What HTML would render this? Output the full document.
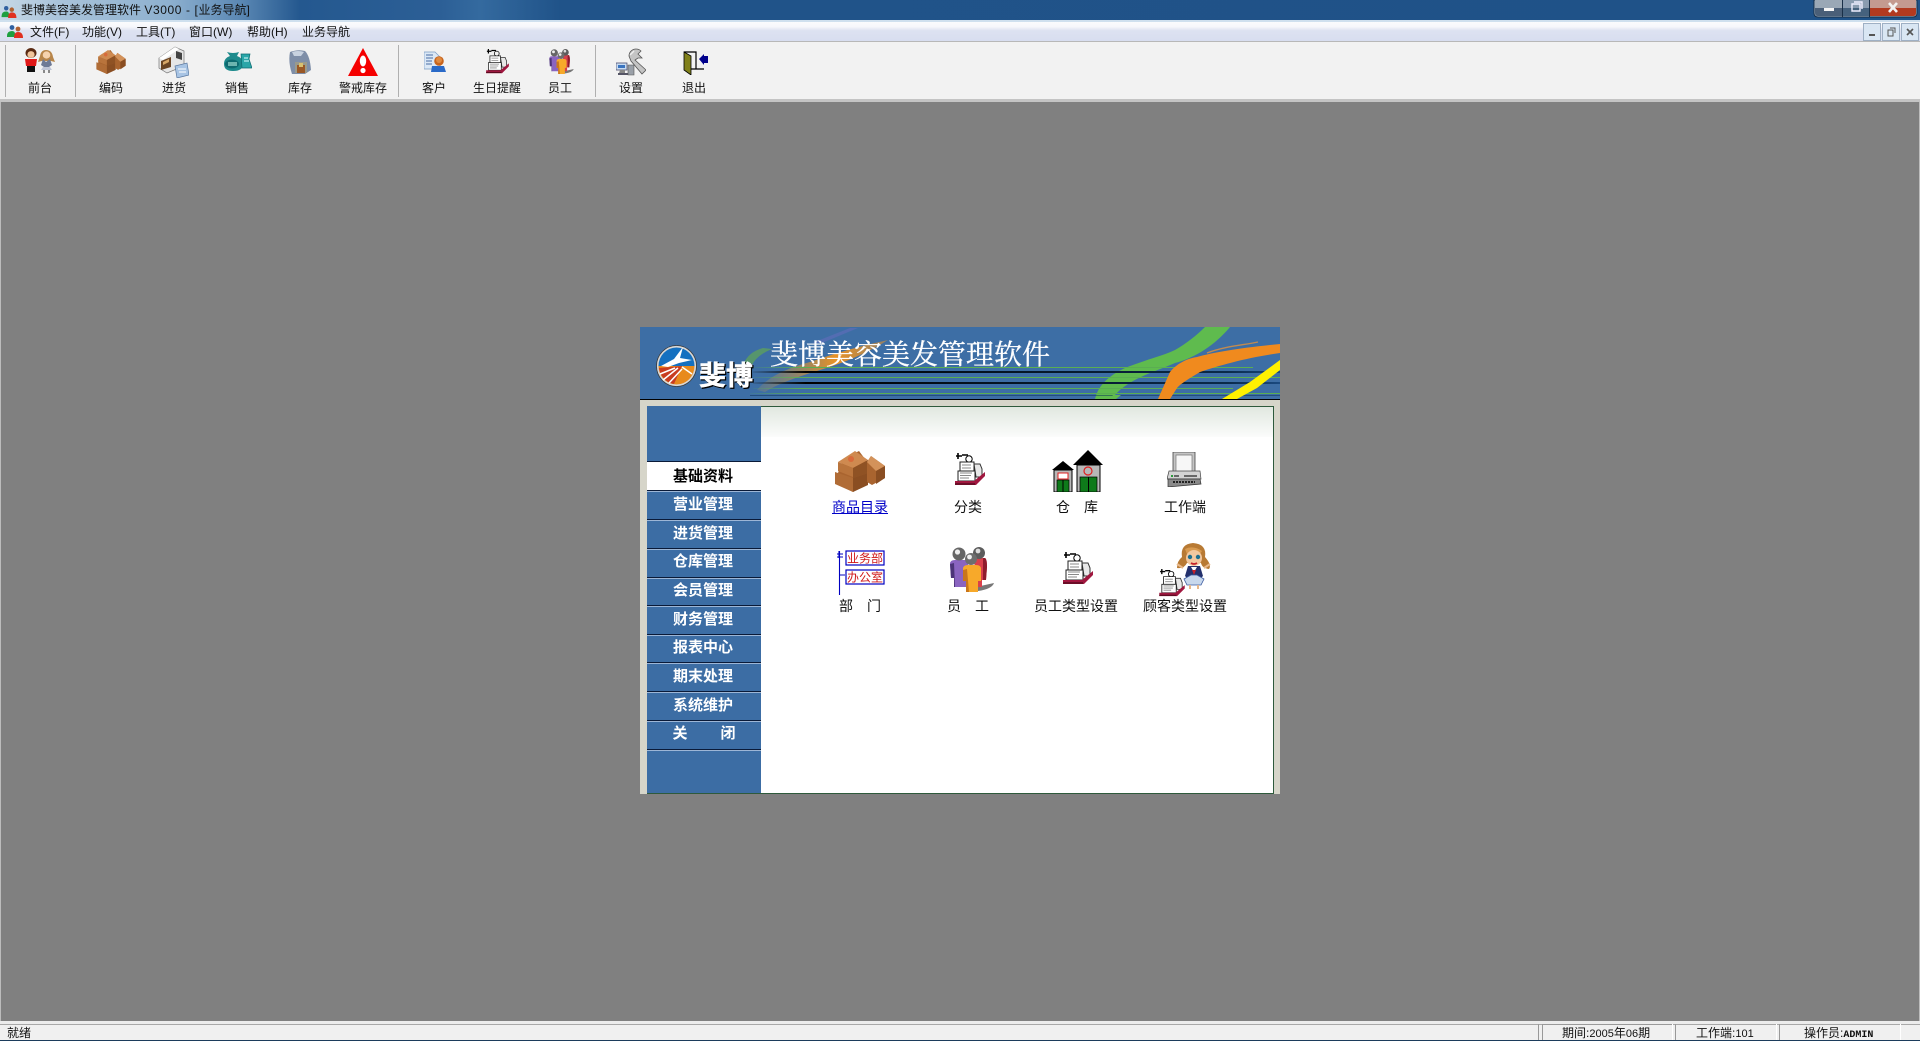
<!DOCTYPE html>
<html lang="zh"><head><meta charset="utf-8"><title>斐博美容美发管理软件</title>
<style>
html,body{margin:0;padding:0;width:1920px;height:1041px;overflow:hidden;background:#808080}
body{position:relative;font-family:"Liberation Sans","WenQuanYi Zen Hei","Noto Sans CJK SC",sans-serif;font-size:12px;color:#111}
.a{position:absolute}
.t{position:absolute;white-space:nowrap;line-height:16px;height:16px}
.c{transform:translateX(-50%)}
.m{font-size:14px;color:#111}
.s{font-weight:bold;font-size:15px;color:#fff;font-family:"Liberation Sans","Noto Sans CJK SC",sans-serif}
.mono{font-family:"Liberation Mono",monospace;font-size:10px}
.dg{font-family:"Liberation Sans",sans-serif;font-size:11px}
</style></head><body>
<!-- title bar -->
<div class="a" style="left:0;top:0;width:1920px;height:20px;background:linear-gradient(90deg,#c6d8e6 0,#a9c3da 60px,#8db0cf 170px,#5b88b4 240px,#24588f 300px,#2c5f96 440px,#346a9f 480px,#205389 560px,#1f5288 1920px)"></div>
<div class="a" style="left:0;top:20px;width:1920px;height:2px;background:#cfe0ee"></div>
<div class="t" style="left:21px;top:2px;color:#111">斐博美容美发管理软件 <span style="letter-spacing:.6px">V3000 - [</span>业务导航]</div>
<!-- menu bar -->
<div class="a" style="left:0;top:22px;width:1920px;height:19px;background:linear-gradient(#fafbfd 0,#f6f7fb 25%,#dde2f1 45%,#d8def0 100%)"></div>
<div class="a" style="left:0;top:41px;width:1920px;height:1px;background:#b8b8b8"></div>
<div class="t" style="left:30px;top:24px">文件(F)</div>
<div class="t" style="left:82px;top:24px">功能(V)</div>
<div class="t" style="left:136px;top:24px">工具(T)</div>
<div class="t" style="left:189px;top:24px">窗口(W)</div>
<div class="t" style="left:247px;top:24px">帮助(H)</div>
<div class="t" style="left:302px;top:24px">业务导航</div>
<!-- toolbar -->
<div class="a" style="left:0;top:42px;width:1920px;height:57px;background:#f2f2f2"></div>
<div class="a" style="left:0;top:99px;width:1920px;height:3px;background:#c4c4c4"></div>
<div class="a" style="left:5px;top:45px;width:1px;height:52px;background:#b0b0b0"></div>
<div class="a" style="left:75px;top:45px;width:1px;height:52px;background:#b0b0b0"></div>
<div class="a" style="left:398px;top:45px;width:1px;height:52px;background:#b0b0b0"></div>
<div class="a" style="left:595px;top:45px;width:1px;height:52px;background:#b0b0b0"></div>
<div class="t c" style="left:40px;top:80px">前台</div>
<div class="t c" style="left:111px;top:80px">编码</div>
<div class="t c" style="left:174px;top:80px">进货</div>
<div class="t c" style="left:237px;top:80px">销售</div>
<div class="t c" style="left:300px;top:80px">库存</div>
<div class="t c" style="left:363px;top:80px">警戒库存</div>
<div class="t c" style="left:434px;top:80px">客户</div>
<div class="t c" style="left:497px;top:80px">生日提醒</div>
<div class="t c" style="left:560px;top:80px">员工</div>
<div class="t c" style="left:631px;top:80px">设置</div>
<div class="t c" style="left:694px;top:80px">退出</div>
<!-- mdi edges -->
<div class="a" style="left:0;top:102px;width:1px;height:920px;background:#bcbcbc"></div>
<div class="a" style="left:1919px;top:102px;width:1px;height:920px;background:#bcbcbc"></div>
<!-- panel -->
<div class="a" style="left:640px;top:327px;width:640px;height:467px;background:#d6d5c9"></div>
<div class="a" style="left:647px;top:406px;width:627px;height:388px;background:#fff;box-sizing:border-box;border:1px solid #2e5a3c;border-left:0"></div>
<div class="a" style="left:761px;top:407px;width:512px;height:30px;background:linear-gradient(#e1e8e0,#fbfcfb)"></div>
<div class="a" style="left:647px;top:406px;width:114px;height:387px;background:#3c6da4"></div>
<div class="a" style="left:647px;top:793px;width:114px;height:1px;background:#2e5a3c"></div>
<div class="a" style="left:647px;top:462px;width:114px;height:28px;background:#fff"></div>
<div class="a" style="left:647px;top:461px;width:114px;height:1px;background:#0a1a38"></div>
<div class="a" style="left:647px;top:490px;width:114px;height:1px;background:#0a1a38"></div>
<div class="a" style="left:647px;top:519px;width:114px;height:1px;background:#0a1a38"></div>
<div class="a" style="left:647px;top:548px;width:114px;height:1px;background:#0a1a38"></div>
<div class="a" style="left:647px;top:577px;width:114px;height:1px;background:#0a1a38"></div>
<div class="a" style="left:647px;top:605px;width:114px;height:1px;background:#0a1a38"></div>
<div class="a" style="left:647px;top:634px;width:114px;height:1px;background:#0a1a38"></div>
<div class="a" style="left:647px;top:662px;width:114px;height:1px;background:#0a1a38"></div>
<div class="a" style="left:647px;top:691px;width:114px;height:1px;background:#0a1a38"></div>
<div class="a" style="left:647px;top:720px;width:114px;height:1px;background:#0a1a38"></div>
<div class="a" style="left:647px;top:749px;width:114px;height:1px;background:#0a1a38"></div>
<div class="a" style="left:647px;top:491px;width:114px;height:1px;background:#9db6d6"></div>
<div class="a" style="left:647px;top:520px;width:114px;height:1px;background:#9db6d6"></div>
<div class="a" style="left:647px;top:549px;width:114px;height:1px;background:#9db6d6"></div>
<div class="a" style="left:647px;top:578px;width:114px;height:1px;background:#9db6d6"></div>
<div class="a" style="left:647px;top:606px;width:114px;height:1px;background:#9db6d6"></div>
<div class="a" style="left:647px;top:635px;width:114px;height:1px;background:#9db6d6"></div>
<div class="a" style="left:647px;top:663px;width:114px;height:1px;background:#9db6d6"></div>
<div class="a" style="left:647px;top:692px;width:114px;height:1px;background:#9db6d6"></div>
<div class="a" style="left:647px;top:721px;width:114px;height:1px;background:#9db6d6"></div>
<div class="a" style="left:647px;top:750px;width:114px;height:1px;background:#9db6d6"></div>
<div class="t c s" style="left:703px;top:469px;color:#000">基础资料</div>
<div class="t c s" style="left:703px;top:497px">营业管理</div>
<div class="t c s" style="left:703px;top:526px">进货管理</div>
<div class="t c s" style="left:703px;top:554px">仓库管理</div>
<div class="t c s" style="left:703px;top:583px">会员管理</div>
<div class="t c s" style="left:703px;top:612px">财务管理</div>
<div class="t c s" style="left:703px;top:640px">报表中心</div>
<div class="t c s" style="left:703px;top:669px">期末处理</div>
<div class="t c s" style="left:703px;top:698px">系统维护</div>
<div class="t c s" style="left:680px;top:726px">关</div>
<div class="t c s" style="left:728px;top:726px">闭</div>
<!-- content labels -->
<div class="t c m" style="left:860px;top:499px;color:#0000c8;text-decoration:underline">商品目录</div>
<div class="t c m" style="left:968px;top:499px">分类</div>
<div class="t c m" style="left:1077px;top:499px">仓　库</div>
<div class="t c m" style="left:1185px;top:499px">工作端</div>
<div class="t c m" style="left:860px;top:598px">部　门</div>
<div class="t c m" style="left:968px;top:598px">员　工</div>
<div class="t c m" style="left:1076px;top:598px">员工类型设置</div>
<div class="t c m" style="left:1185px;top:598px">顾客类型设置</div>
<!-- status -->
<div class="a" style="left:0;top:1021px;width:1920px;height:3px;background:#ececec"></div>
<div class="a" style="left:0;top:1024px;width:1920px;height:1px;background:#a8a8a8"></div>
<div class="a" style="left:0;top:1025px;width:1920px;height:15px;background:#f0f0f0"></div>
<div class="a" style="left:0;top:1040px;width:1920px;height:1px;background:#1c3c5c"></div>
<div class="a" style="left:1538px;top:1024px;width:1px;height:16px;background:#999"></div>
<div class="a" style="left:1542px;top:1024px;width:130px;height:1px;background:#999"></div>
<div class="a" style="left:1542px;top:1024px;width:1px;height:16px;background:#999"></div>
<div class="a" style="left:1672px;top:1024px;width:1px;height:16px;background:#fff"></div>
<div class="a" style="left:1675px;top:1024px;width:1px;height:16px;background:#999"></div>
<div class="a" style="left:1776px;top:1024px;width:1px;height:16px;background:#fff"></div>
<div class="a" style="left:1779px;top:1024px;width:1px;height:16px;background:#999"></div>
<div class="a" style="left:1900px;top:1024px;width:1px;height:16px;background:#fff"></div>
<div class="t" style="left:7px;top:1025px">就绪</div>
<div class="t" style="left:1562px;top:1025px">期间:<span class="dg">2005</span>年<span class="dg">06</span>期</div>
<div class="t" style="left:1696px;top:1025px">工作端:<span class="dg">101</span></div>
<div class="t" style="left:1804px;top:1025px">操作员:<span class="mono" style="font-weight:bold">ADMIN</span></div>

<svg class="a" style="left:0;top:0" width="1920" height="1041" viewBox="0 0 1920 1041" xmlns="http://www.w3.org/2000/svg">
<defs>
<symbol id="box" viewBox="0 0 50 41">
<path d="M3 22 L8 8 L24 0 L33 12 L33 31 L18 41 L3 33Z" fill="#a9642f"/>
<path d="M3 11 L20 0 L33 9 L18 17Z" fill="#cf8a50"/>
<path d="M3 11 L18 17 L18 26 L3 20Z" fill="#b9743c"/>
<path d="M18 17 L33 9 L33 22 L18 27Z" fill="#8f5224"/>
<path d="M0 21 L18 27 L18 41 L0 33Z" fill="#b06c36"/>
<path d="M18 27 L33 22 L33 34 L18 41Z" fill="#8a4e22"/>
<path d="M32 11 L36 5 L50 15 L50 27 L37 34 L32 31Z" fill="#a9642f"/>
<path d="M32 11 L36 5 L50 15 L41 20Z" fill="#d3925a"/>
<path d="M41 20 L50 15 L50 27 L41 33Z" fill="#8a4e22"/>
<circle cx="16" cy="8" r="3" fill="#d86a3a"/>
</symbol>
<symbol id="printer" viewBox="0 0 30 33">
<path d="M1 3 H7 M3 0 V6 M7 2 H13" stroke="#000" stroke-width="1.6" fill="none"/>
<circle cx="14" cy="6" r="3.2" fill="none" stroke="#000"/>
<path d="M5 9 H19 V19 H5Z" fill="#fff" stroke="#222"/>
<path d="M19 11 H25 L27 16 V24 H21Z" fill="#e8e8e8" stroke="#333"/>
<path d="M3 18 H20 V28 H3Z" fill="#fff" stroke="#222"/>
<path d="M5 20 H17 M5 22.5 H16 M5 25 H14 M7 12 H16 M7 15 H16" stroke="#888"/>
<path d="M0 28 H19 L30 19 V23 L21 32 H0Z" fill="#a0173f"/>
<path d="M0 31 H20" stroke="#5a0c20" stroke-width="1.4"/>
</symbol>
<symbol id="team" viewBox="0 0 46 45">
<path d="M28 40 L46 36 Q44 42 30 44Z" fill="#777"/>
<path d="M26 11 H37 Q39 12 39 20 L38 33 H34 V40 H28Z" fill="#d8404c"/>
<path d="M35 11 H37 Q39 12 39 20 L38 33 H35Z" fill="#8f1c2c"/>
<path d="M2 17 Q2 13 7 13 H17 Q20 13 20 17 L20 40 H6 V31 H3Z" fill="#8a64c0"/>
<path d="M2 17 L6 16 L7 40 H6 V31 H3Z" fill="#4c3478"/>
<path d="M15 22 Q15 18 20 18 H28 Q33 18 33 22 L33 34 H30 V45 H18 V34 H15Z" fill="#f7a92a"/>
<path d="M15 23 L19 22 L21 45 H18 V34 H15Z" fill="#c9761a"/>
<circle cx="11" cy="7" r="6.5" fill="#666"/><circle cx="9.5" cy="5" r="2.6" fill="#eee"/>
<circle cx="31" cy="6" r="6" fill="#5c5c5c"/><circle cx="30" cy="4" r="2.4" fill="#ddd"/>
<circle cx="23" cy="12" r="6" fill="#6e6e6e"/><circle cx="21.5" cy="10" r="2.4" fill="#f0f0f0"/>
</symbol>
<symbol id="girl" viewBox="0 0 37 47">
<path d="M7 14 Q5 1 18 0 Q32 1 30 14 Q37 22 34 26 Q27 25 26 20 H12 Q9 26 2 25 Q2 18 7 14Z" fill="#b87a34"/>
<path d="M10 6 Q18 2 27 8 L25 11 H12Z" fill="#d89a50"/>
<ellipse cx="19" cy="15" rx="8" ry="8" fill="#f2c8a0"/>
<circle cx="15" cy="14" r="2.2" fill="#1d6f90"/><circle cx="23" cy="14" r="2.2" fill="#1d6f90"/>
<path d="M16 20 Q19 22 22 20" stroke="#c4202a" stroke-width="1.8" fill="none"/>
<path d="M13 23 H25 L28 33 L23 38 H15 L10 33Z" fill="#23306c"/>
<path d="M16 24 L19 29 L22 24" fill="#fff"/><path d="M17 27 L19 32 L21 27Z" fill="#c4202a"/>
<path d="M9 36 L16 32 H22 L29 36 L26 42 H12Z" fill="#c8d8ec" stroke="#3a5aa0" stroke-width=".8"/>
<path d="M15 42 V46 M23 42 V46" stroke="#e8b88a" stroke-width="2"/>
<path d="M8 25 L2 21 M29 25 L35 21" stroke="#e8b88a" stroke-width="2"/>
</symbol>
<symbol id="pair" viewBox="0 0 32 25">
<ellipse cx="7" cy="5" rx="5.5" ry="5" fill="#5a2a12"/>
<ellipse cx="7" cy="6.5" rx="3.6" ry="3.4" fill="#f0c49a"/>
<path d="M1 11 H13 L12 18 H2Z" fill="#e01818"/><path d="M3 18 H11 V24 H3Z" fill="#111"/>
<path d="M22 2 Q28 2 29 9 L31 14 L27 13 H18 L14 14 L16 8 Q17 2 22 2Z" fill="#b8864a"/>
<ellipse cx="22.5" cy="7" rx="3.8" ry="3.6" fill="#f6d3ae"/>
<path d="M19 11 L22 14 L26 11 L28 17 L25 19 H20 L17 17Z" fill="#6e7a96"/>
<path d="M19 19 H26 L28 22 H17Z" fill="#bfc5d6"/><path d="M20 22 V25 M25 22 V25" stroke="#444" stroke-width="1.2"/>
</symbol>
<symbol id="scan" viewBox="0 0 31 32">
<path d="M1 12 L17 1 L26 5 L26 20 L9 27 L1 22Z" fill="#e6e6e6" stroke="#777" stroke-width=".7"/>
<path d="M1 12 L17 1 L21 3 L5 14Z" fill="#fff"/>
<path d="M3 15 L13 11 V21 L3 24Z" fill="#6a4524"/><path d="M5 16 L11 13 V16 L5 19Z" fill="#d8a868"/>
<path d="M18 5 L24 7 V14 L18 12Z" fill="#444"/>
<path d="M17 20 L29 17 L31 29 L19 32Z" fill="#a8c4e4" stroke="#5a78a0" stroke-width=".7"/>
<path d="M20 23 H28 M21 26 H28" stroke="#fff"/>
</symbol>
<symbol id="bag" viewBox="0 0 30 20">
<path d="M2 13 Q2 7 8 5 L5 1 Q11 3 17 1 L15 5 Q21 7 21 13 Q21 20 11 20 Q2 20 2 13Z" fill="#1d8a8c"/>
<ellipse cx="10" cy="13" rx="7" ry="4.5" fill="#0e6a70"/>
<path d="M6 12 H15 M6 14 H15" stroke="#cfe" stroke-width="1"/>
<path d="M19 3 H28 L27 8 L30 17 H20 Z" fill="#2aa6a8" stroke="#0e6a70" stroke-width=".7"/>
<path d="M22 7 H26 M22 10 H27" stroke="#dff" stroke-width="1"/>
</symbol>
<symbol id="store" viewBox="0 0 24 24">
<path d="M2 2 Q10 -1 17 1 Q22 6 23 20 L17 24 H4 Q0 12 2 2Z" fill="#7e8ea8"/>
<path d="M4 2 Q10 0 16 2 L13 6 H6Z" fill="#c8d2e0"/>
<path d="M7 12 H19 V23 H7Z" fill="#9a9a8c"/>
<path d="M9 15 H17 V23 H9Z" fill="#9a5826"/><path d="M11 13 H15 V17 H11Z" fill="#d8c070"/>
</symbol>
<symbol id="alert" viewBox="0 0 30 28">
<path d="M15 0 L30 28 H0Z" fill="#f50000"/>
<ellipse cx="15" cy="13" rx="3.2" ry="5.5" fill="#fff"/>
<circle cx="15" cy="22.5" r="2.6" fill="#fff"/>
</symbol>
<symbol id="cust" viewBox="0 0 22 22">
<path d="M0 1 H11 L16 6 V18 H0Z" fill="#dbe8f6" stroke="#7a9ac4" stroke-width=".7"/>
<path d="M2 4 H9 M2 7 H9 M2 10 H8 M2 13 H8" stroke="#4a6ca4"/>
<path d="M8 15 H20 L22 21 H7Z" fill="#2a6ac8"/>
<circle cx="15" cy="10" r="4.8" fill="#c8641c"/><circle cx="15" cy="9" r="3" fill="#e08a40"/>
</symbol>
<symbol id="tools" viewBox="0 0 30 28">
<path d="M20 1 A7 7 0 0 0 13 8 L15 13 L26 26 L30 22 L19 12 L22 10 L26 10 L22 6 L25 3 Q23 1 20 1Z" fill="#c4c4c4" stroke="#555" stroke-width=".8"/>
<path d="M14 7 L18 3" stroke="#eee" stroke-width="1.4"/>
<path d="M0 15 H11 V22 H0Z" fill="#c8dcf2" stroke="#446" stroke-width=".7"/>
<path d="M2 17 H9 V20 H2Z" fill="#3a74c0"/>
<path d="M4 22 H9 V25 H3Z" fill="#888"/><path d="M2 25 H12 V27 H2Z" fill="#556"/>
<path d="M12 17 H18 V27 H12Z" fill="#9aa0a8" stroke="#555" stroke-width=".6"/>
</symbol>
<symbol id="door" viewBox="0 0 25 24">
<path d="M1 1 H13 V18" stroke="#000" stroke-width="1.2" fill="none"/>
<path d="M1 18 H21" stroke="#000" stroke-width="1.2"/>
<path d="M1 1 L8 5 V24 L1 19Z" fill="#80801a" stroke="#000" stroke-width=".8"/>
<path d="M16 8 L21 3 V5 H25 V12 H21 V14Z" fill="#00008c"/>
</symbol>
<symbol id="ware" viewBox="0 0 51 42">
<path d="M0 20 L11 11 L22 20Z" fill="#000"/>
<rect x="2" y="20" width="18" height="22" fill="#b8b8b8" stroke="#000"/>
<rect x="6" y="23" width="10" height="6" fill="#fff" stroke="#e02020"/>
<rect x="5" y="30" width="12" height="12" fill="#0e7a1a" stroke="#000" stroke-width=".7"/>
<path d="M11 30 V42" stroke="#000"/>
<path d="M21 15 L36 0 L51 15Z" fill="#000"/>
<rect x="25" y="15" width="23" height="27" fill="#b8b8b8" stroke="#000"/>
<circle cx="36" cy="21" r="4" fill="none" stroke="#e02020" stroke-width="1.2"/>
<rect x="28" y="27" width="17" height="15" fill="#0e7a1a" stroke="#000" stroke-width=".7"/>
<path d="M36.5 27 V42" stroke="#000"/>
</symbol>
<symbol id="pc" viewBox="0 0 35 35">
<path d="M6 0 H28 V24 H6Z" fill="#c4c4c4" stroke="#444" stroke-width=".8"/>
<path d="M9 3 H25 V20 H9Z" fill="#f7f7f7" stroke="#777" stroke-width=".7"/>
<path d="M2 19 H33 L34 27 H0Z" fill="#d4d4d4" stroke="#444" stroke-width=".7"/>
<path d="M7 24 H12 M17 24 H30" stroke="#444" stroke-width="1.4"/>
<rect x="4" y="23" width="2" height="2" fill="#2a9a3a"/>
<path d="M1 27 H33 L34 32 L1 35Z" fill="#8a8a8a" stroke="#333" stroke-width=".7"/>
<path d="M6 30 H28" stroke="#222" stroke-width="2" stroke-dasharray="2 1"/>
</symbol>
<symbol id="dept" viewBox="0 0 49 45">
<path d="M1 4 H7 M1 7 H7 M3 1 V8 M3.5 1 V45 M3.5 25 H9" stroke="#0000c0" stroke-width="1.1" fill="none"/>
<rect x="10" y="1" width="38" height="14" fill="#fff" stroke="#0000c0" stroke-width="1.2"/>
<rect x="10" y="20" width="38" height="14" fill="#fff" stroke="#0000c0" stroke-width="1.2"/>
<text x="29" y="12.5" font-size="12" text-anchor="middle" fill="#d01818" font-family="'WenQuanYi Zen Hei','Noto Sans CJK SC',sans-serif">业务部</text>
<text x="29" y="31.5" font-size="12" text-anchor="middle" fill="#d01818" font-family="'WenQuanYi Zen Hei','Noto Sans CJK SC',sans-serif">办公室</text>
</symbol>
<symbol id="app" viewBox="0 0 16 14">
<circle cx="5" cy="3.5" r="2.4" fill="#3060a0"/><circle cx="11" cy="5" r="2.4" fill="#b06030"/>
<path d="M0 12 Q0 7 5 7 Q8 7 8 10 V13 H0Z" fill="#1ea040"/>
<path d="M7 14 Q7 8 11 8 Q16 8 16 14Z" fill="#e03020"/>
</symbol>
<linearGradient id="gl" x1="0" x2="1"><stop offset="0" stop-color="#5aae52" stop-opacity=".1"/><stop offset=".1" stop-color="#5aae52"/><stop offset="1" stop-color="#5aae52"/></linearGradient>
<linearGradient id="bl" x1="0" x2="1"><stop offset="0" stop-color="#000" stop-opacity=".1"/><stop offset=".1" stop-color="#000"/><stop offset=".9" stop-color="#0a2a4a"/><stop offset="1" stop-color="#1a4a80"/></linearGradient>
<linearGradient id="ol" x1="0" x2="1"><stop offset="0" stop-color="#8c8a70" stop-opacity=".3"/><stop offset=".6" stop-color="#e89226"/><stop offset="1" stop-color="#e89226" stop-opacity=".5"/></linearGradient>
</defs>

<!-- title bar app icon / menu icon -->
<use href="#app" x="1" y="5" width="16" height="13"/>
<use href="#app" x="7" y="24" width="16" height="14"/>

<!-- window buttons -->
<path d="M1814 0 V13 Q1814 17 1818 17 H1913 Q1917 17 1917 13 V0Z" fill="#a8b8c8" stroke="#1a3048"/>
<path d="M1815 0 H1842 V8 H1815Z" fill="#9aa8b6"/><path d="M1815 8 H1842 V16 H1818 Q1815 16 1815 13Z" fill="#4a5f78"/>
<path d="M1843 0 H1869 V8 H1843Z" fill="#8a9cb0"/><path d="M1843 8 H1869 V16 H1843Z" fill="#46627e"/>
<path d="M1870 0 H1916 V8 H1870Z" fill="#c49a90"/><path d="M1870 8 H1916 V13 Q1916 16 1913 16 H1870Z" fill="#b23a20"/>
<path d="M1842.5 0 V17 M1869.5 0 V17" stroke="#1a3048"/>
<rect x="1824" y="8" width="10" height="3" fill="#f4f4f4"/>
<path d="M1852 4 H1860 V11 H1852Z M1854 2 H1862 V9" fill="none" stroke="#eef" stroke-width="1.4"/>
<path d="M1889 3 L1897 12 M1897 3 L1889 12" stroke="#f2f2f2" stroke-width="2.6"/>
<g fill="#d9e6f3" stroke="#9fb0c4"><rect x="1863.5" y="23.5" width="17" height="17"/><rect x="1882.5" y="23.5" width="17" height="17"/><rect x="1901.5" y="23.5" width="17" height="17"/></g>
<rect x="1869" y="34" width="6" height="2" fill="#555"/>
<path d="M1888 30 H1893 V36 H1888Z M1890 28 H1895 V33" fill="none" stroke="#555"/>
<path d="M1907 29 L1913 35 M1913 29 L1907 35" stroke="#555" stroke-width="1.6"/>

<!-- toolbar icons -->
<use href="#pair" x="24" y="48" width="32" height="25"/>
<use href="#box" x="96" y="50" width="30" height="24"/>
<use href="#scan" x="158" y="46" width="31" height="32"/>
<use href="#bag" x="222" y="51" width="30" height="20"/>
<use href="#store" x="288" y="50" width="24" height="24"/>
<use href="#alert" x="348" y="48" width="30" height="28"/>
<use href="#cust" x="424" y="51" width="22" height="22"/>
<use href="#printer" x="485" y="49" width="25" height="25"/>
<use href="#team" x="548" y="49" width="26" height="25"/>
<use href="#tools" x="616" y="48" width="30" height="28"/>
<use href="#door" x="683" y="51" width="25" height="24"/>

<!-- header banner -->
<rect x="640" y="327" width="640" height="72" fill="#3d6ea5"/>
<path d="M743 365 Q748 352 763 348 L772 349 Q757 355 752 365Z" fill="#5fa35a" opacity=".75"/>
<path d="M812 343 L850 328 L858 328 L822 343Z" fill="#6a6cc0" opacity=".5"/>
<path d="M757 390 Q772 372 810 362 Q850 348 888 340 Q860 358 820 370 Q780 382 765 392Z" fill="url(#ol)"/>
<path d="M1205 327 L1230 327 C1215 345 1195 358 1175 363 C1155 372 1130 378 1115 395 L1112 399 L1095 399 C1098 385 1110 375 1125 368 C1145 360 1165 355 1175 350 C1187 343 1197 335 1205 327Z" fill="#5fbb4e"/>
<g>
<rect x="753" y="367" width="500" height="1" fill="url(#gl)"/>
<rect x="753" y="371" width="527" height="2" fill="url(#bl)"/>
<rect x="753" y="377" width="527" height="1" fill="url(#gl)"/>
<rect x="753" y="382" width="527" height="2" fill="url(#bl)"/>
<rect x="753" y="388" width="480" height="1" fill="url(#gl)"/>
<rect x="750" y="393" width="530" height="1" fill="url(#gl)"/>
<rect x="750" y="395" width="530" height="1" fill="#0a3058" opacity=".5"/>
</g>
<path d="M1110 399 L1113 395 L1121 395 L1116 399Z" fill="#5fbb4e"/>
<path d="M1158 399 L1170 372 C1178 362 1190 358 1197 357 C1215 352 1240 348 1280 344 V353 C1250 357 1220 365 1200 372 C1190 378 1180 384 1177 388 L1170 399Z" fill="#f08a1e"/>
<path d="M1207 353 C1225 346 1245 345 1258 342" stroke="#c08a50" stroke-width="1.4" fill="none"/>
<path d="M1222 399 L1250 382 L1280 360 V370 L1257 388 L1237 399Z" fill="#fff000"/>
<rect x="640" y="399" width="640" height="1" fill="#000"/>
<!-- logo -->
<ellipse cx="676.5" cy="366" rx="20" ry="20.5" fill="#d8d8d8" stroke="#3a3a3a" stroke-width=".8"/>
<path d="M658.5 366 A18 18.5 0 0 1 694.5 366 Z" fill="#1470c0"/>
<path d="M658.5 366 L694.5 366 A18 18.5 0 0 1 658.5 366 Z" fill="#e88a1c"/>
<path d="M659 368 L682 366 L674 384 A18 18.5 0 0 1 659 368Z" fill="#c83c20"/>
<path d="M663 380 L678 368 M669 383 L682 369 M660 374 L675 368 M682 367 L692 374" stroke="#fff" stroke-width="1.5"/>
<path d="M661 366 L674 359 L683 347 L680 358 L692 360 L679 363 L668 367Z" fill="#fff"/>
<text x="727" y="386" font-size="27" font-weight="bold" text-anchor="middle" fill="#000" font-family="'Noto Sans CJK SC',sans-serif" stroke="#000" stroke-width="1">斐博</text>
<text x="726" y="385" font-size="27" font-weight="bold" text-anchor="middle" fill="#fff" stroke="#fff" stroke-width=".5" font-family="'Noto Sans CJK SC',sans-serif">斐博</text>
<text x="770" y="364" font-size="28" fill="#fff" stroke="#fff" stroke-width=".3" font-family="'Noto Serif CJK SC',serif">斐博美容美发管理软件</text>

<!-- content icons -->
<use href="#box" x="835" y="451" width="50" height="41"/>
<use href="#printer" x="955" y="453" width="30" height="33"/>
<use href="#ware" x="1052" y="450" width="51" height="42"/>
<use href="#pc" x="1167" y="452" width="35" height="35"/>
<use href="#dept" x="836" y="550" width="49" height="45"/>
<use href="#team" x="948" y="547" width="46" height="45"/>
<use href="#printer" x="1063" y="552" width="30" height="33"/>
<use href="#girl" x="1175" y="543" width="37" height="47"/>
<use href="#printer" x="1159" y="569" width="26" height="28"/>
</svg>
</body></html>
